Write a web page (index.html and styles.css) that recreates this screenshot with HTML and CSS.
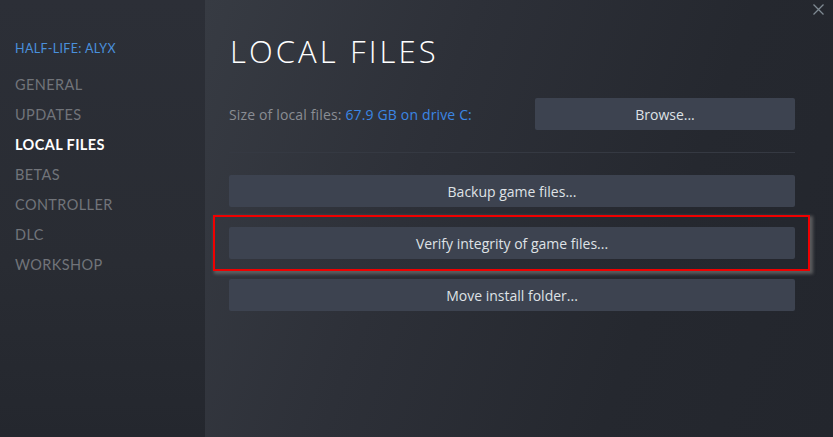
FILE: index.html
```html
<!DOCTYPE html>
<html>
<head>
<meta charset="utf-8">
<link rel="stylesheet" href="styles.css">
</head>
<body>
<div class="window">
  <nav class="sidebar">
    <div class="game-title">HALF-LIFE: ALYX</div>
    <ul class="nav">
      <li class="nav-item">GENERAL</li>
      <li class="nav-item">UPDATES</li>
      <li class="nav-item active">LOCAL FILES</li>
      <li class="nav-item">BETAS</li>
      <li class="nav-item">CONTROLLER</li>
      <li class="nav-item">DLC</li>
      <li class="nav-item">WORKSHOP</li>
    </ul>
  </nav>
  <main class="content">
    <button class="close" aria-label="Close">
      <svg width="11" height="11" viewBox="0 0 11 11"><path d="M0.5 0.5 L10.5 10.5 M10.5 0.5 L0.5 10.5" stroke="#7f8a93" stroke-width="1.3" fill="none"/></svg>
    </button>
    <h1 class="page-title">LOCAL FILES</h1>
    <div class="size-row">
      <div class="size-label">Size of local files: <span class="size-value">67.9 GB on drive C:</span></div>
      <button class="btn btn-browse">Browse...</button>
    </div>
    <div class="separator"></div>
    <div class="actions">
      <button class="btn">Backup game files...</button>
      <button class="btn">Verify integrity of game files...</button>
      <button class="btn">Move install folder...</button>
    </div>
    <div class="highlight"></div>
  </main>
</div>
</body>
</html>
```
FILE: styles.css
```css
* { box-sizing: border-box; }
html, body {
  margin: 0;
  padding: 0;
  width: 833px;
  height: 437px;
  overflow: hidden;
  background: #24272e;
}
.window {
  display: flex;
  width: 833px;
  height: 437px;
  font-family: "Open Sans", "Noto Sans", sans-serif;
}
.sidebar {
  width: 205px;
  flex: none;
  background: linear-gradient(180deg, #2c2f37 0%, #292c33 60%, #24272e 100%);
  padding: 40px 0 0 15px;
}
.game-title {
  font-family: "Lato", "Open Sans", sans-serif;
  color: #4a90dc;
  font-size: 12.5px;
  font-weight: 400;
  letter-spacing: 0.35px;
  line-height: 18px;
  height: 18px;
}
.nav {
  list-style: none;
  margin: 12px 0 0 0;
  padding: 0;
}
.nav-item {
  font-family: "Lato", "Open Sans", sans-serif;
  color: #71747a;
  font-size: 14.5px;
  line-height: 30px;
  height: 30px;
  letter-spacing: 0.4px;
}
.nav-item.active {
  color: #ffffff;
  font-weight: 700;
}
.content {
  position: relative;
  flex: 1;
  padding: 0 38px 0 24px;
  background: linear-gradient(110deg, #373b43 0%, #2d3038 35%, #25282f 70%, #23262d 100%);
}
.close {
  position: absolute;
  top: 4px;
  right: 9px;
  padding: 0;
  border: 0;
  background: none;
  width: 11px;
  height: 11px;
  display: block;
}
.close svg { display: block; }
.page-title {
  margin: 0;
  padding-top: 30px;
  height: 74px;
  font-weight: 300;
  font-size: 31px;
  line-height: 42px;
  letter-spacing: 3.1px;
  color: #ffffff;
  padding-left: 1px;
}
.size-row {
  display: flex;
  align-items: center;
  justify-content: space-between;
  margin-top: 24px;
  height: 32px;
}
.size-label {
  color: #8a8d93;
  font-size: 14px;
  letter-spacing: 0.15px;
}
.size-value { color: #3b86e4; }
.btn {
  display: block;
  border: 0;
  border-radius: 2px;
  background: #3d4350;
  color: #dfe2e6;
  font-family: "Open Sans", "Noto Sans", sans-serif;
  font-size: 14px;
  height: 32px;
  width: 100%;
  padding: 0;
  text-align: center;
}
.btn-browse { width: 260px; flex: none; }
.separator {
  height: 1px;
  background: #353942;
  margin-top: 22px;
}
.actions {
  display: flex;
  flex-direction: column;
  gap: 20px;
  margin-top: 22px;
}
.highlight {
  position: absolute;
  left: 8px;
  top: 215px;
  width: 597px;
  height: 56px;
  border: 2px solid #f00000;
  box-shadow: 2px 2px 3px 1px rgba(110, 110, 110, 0.75);
}
```
